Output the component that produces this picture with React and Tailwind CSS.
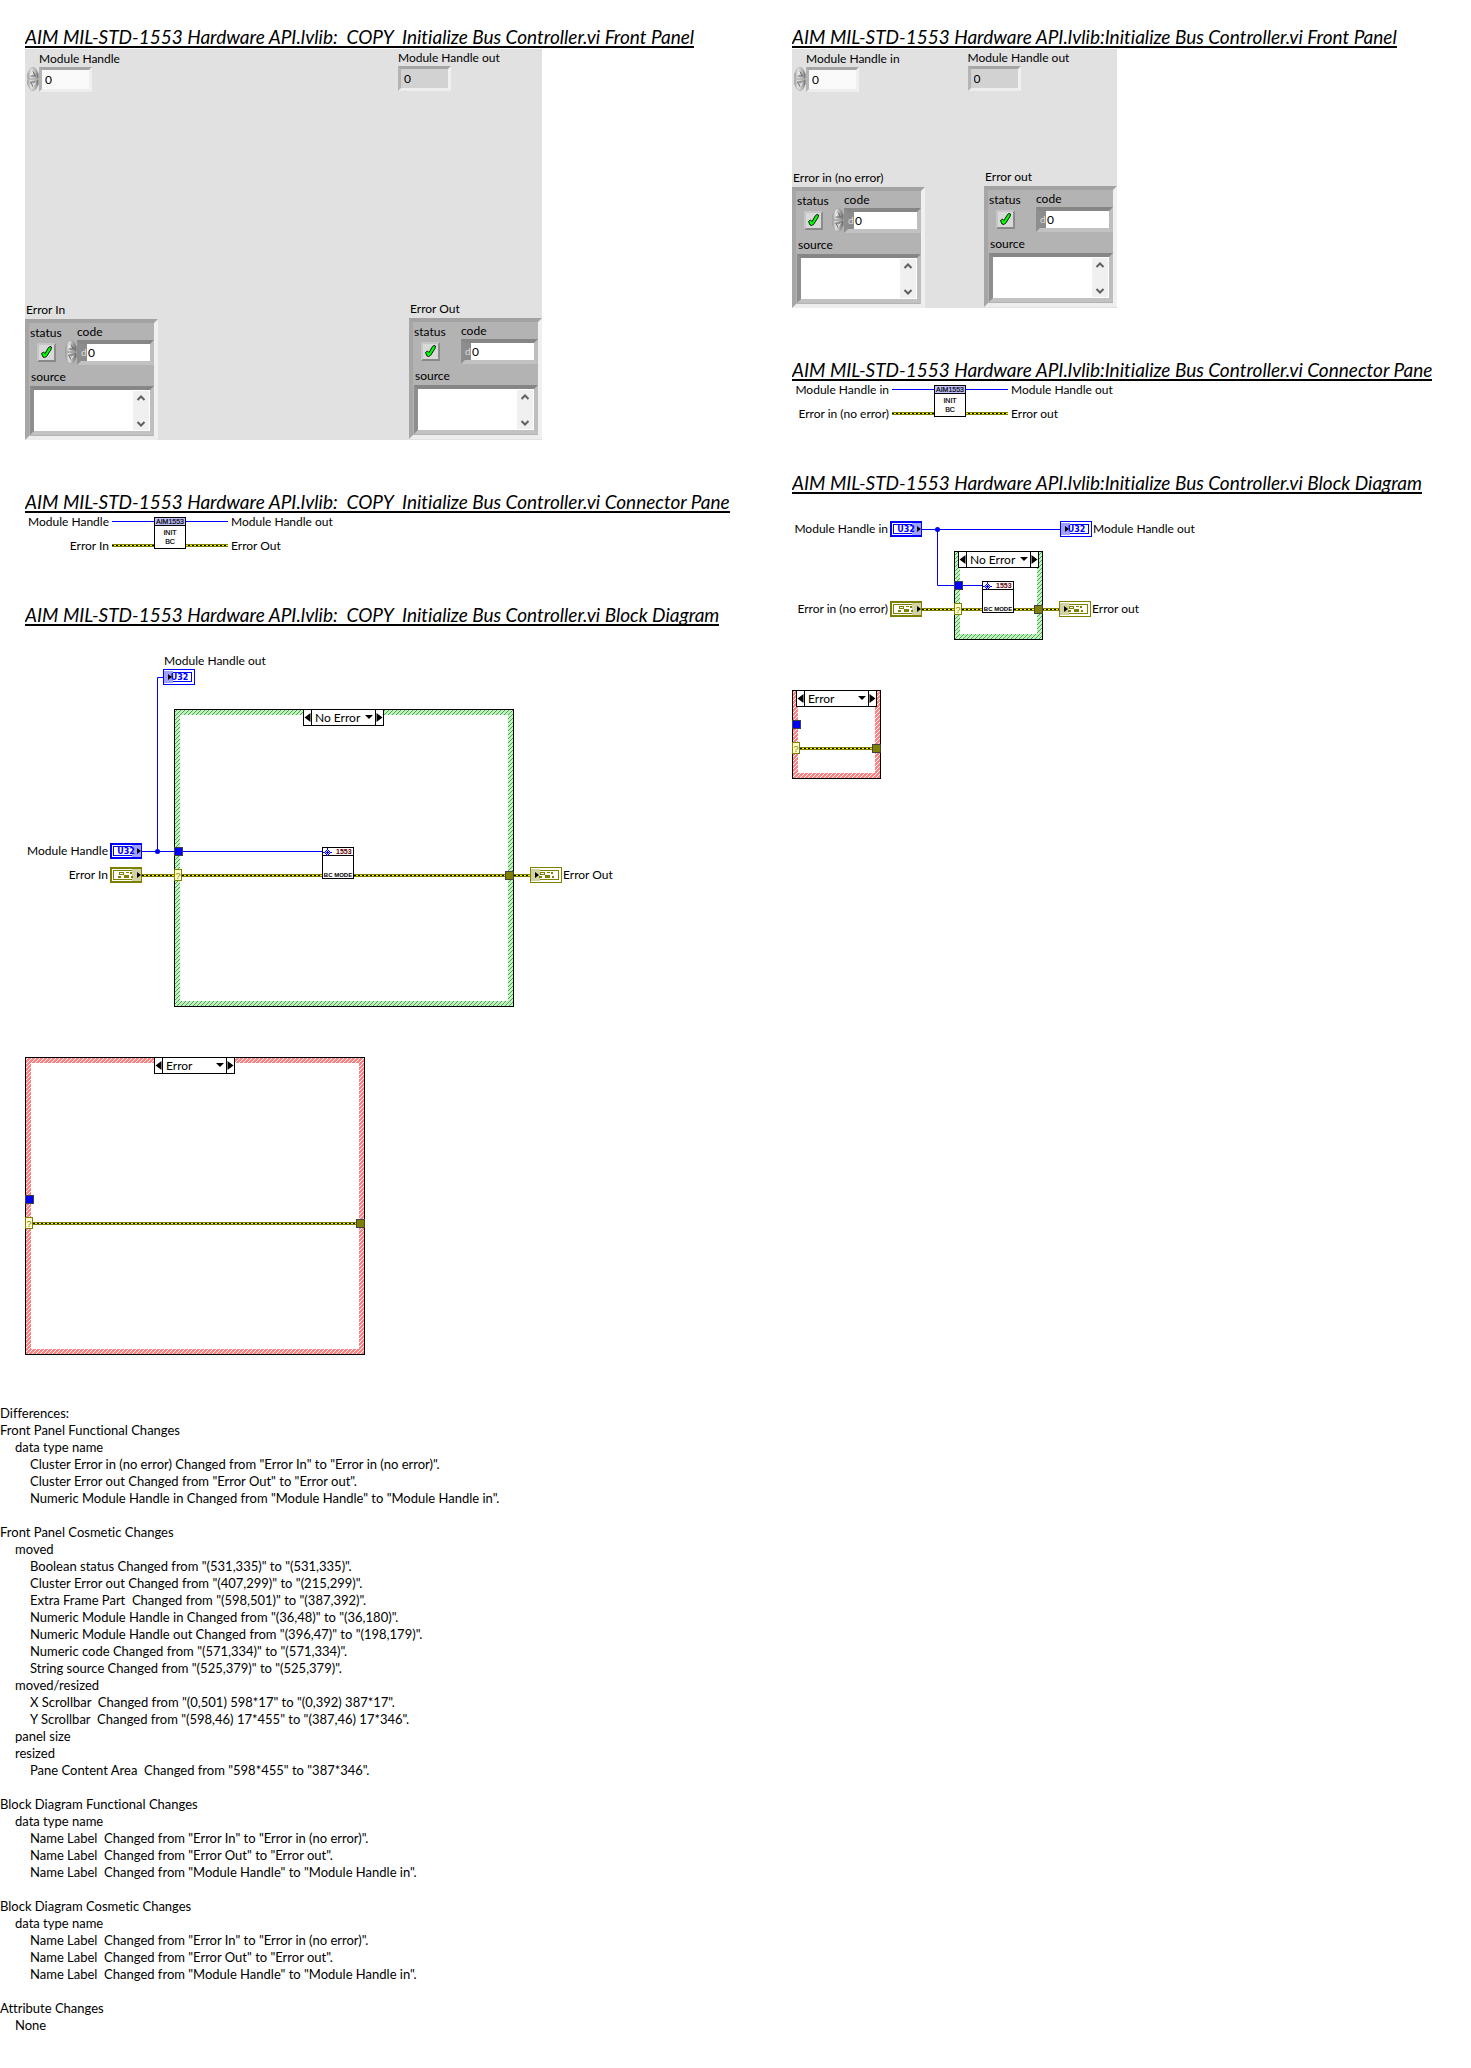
import { useId } from "react";

const BLUE = "#0000ff";
const OLIVE = "#808000";

/* ---------- shared text ---------- */

function Heading({ children }) {
  return (
    <h2 className="h-6 w-fit overflow-hidden border-b-2 border-black text-[19px] leading-[26px] font-normal whitespace-pre italic">
      {children}
    </h2>
  );
}

/* ---------- front panel controls ---------- */

function Spinner({ dark }) {
  const id = useId();
  const shade = dark ? "#94949a" : "#b0b0b0";
  const half = (flip) => (
    <svg width="12" height="12" viewBox="0 0 12 12" aria-hidden="true">
      <defs>
        <linearGradient id={id + flip} x1={flip ? "1" : "0"} x2={flip ? "0" : "1"}>
          <stop offset="0" stopColor="#9a9a9a" />
          <stop offset="0.3" stopColor="#e4e4e4" />
          <stop offset="0.75" stopColor={shade} />
          <stop offset="1" stopColor="#606060" />
        </linearGradient>
      </defs>
      <g transform={flip ? "rotate(180 6 6)" : undefined}>
        <path d="M0.5 11.5V7L3 2L5 0.5H7L9 2L11.5 7V11.5Z" fill={`url(#${id + flip})`} stroke="#9c9c9c" strokeWidth="0.5" />
        <path d="M3.5 9L6 4.5" stroke="#f2f2f2" fill="none" />
        <path d="M6 4.5L8.5 9H3.5" stroke="#505050" fill="none" strokeWidth="0.8" />
      </g>
    </svg>
  );
  return (
    <span className="flex w-3 shrink-0 flex-col">
      <button type="button" aria-label="Increment" className="block h-3">{half("")}</button>
      <button type="button" aria-label="Decrement" className="block h-3">{half("f")}</button>
    </span>
  );
}

function Numeric({ label, readOnly }) {
  const id = useId();
  return (
    <div className={readOnly ? "w-fit pt-px" : "w-fit pt-0.5"}>
      <label htmlFor={id} className={readOnly ? "block leading-4" : "block pl-3 leading-4"}>
        {label}
      </label>
      <div className="flex">
        {!readOnly && <Spinner />}
        <input
          id={id}
          defaultValue="0"
          readOnly={readOnly}
          className={
            "h-[25px] w-[53px] border-[3px] border-t-[#a6a6a6] border-r-[#f0f0f0] border-b-[#ededed] border-l-[#b4b4b4] pl-[3px] outline-none " +
            (readOnly ? "bg-[#d2d2d2]" : "bg-[#fafafa]")
          }
        />
      </div>
    </div>
  );
}

function CheckMark() {
  return (
    <svg width="11" height="12" viewBox="0 0 11 12" className="pointer-events-none absolute top-[3px] left-1" aria-hidden="true">
      <path d="M0.5 7.5L2.5 6L4 7.5L7.5 1.5L9 0.5L10.5 1L10 3.5L5.5 10.5L3.5 11.5L2 11Z" fill="#00ff00" stroke="#000" strokeWidth="0.9" strokeLinejoin="round" />
    </svg>
  );
}

function ScrollArrow({ down }) {
  return (
    <svg width="16" height="12" viewBox="0 0 16 12" aria-hidden="true">
      <path d={down ? "M4.5 4L8 7.5L11.5 4" : "M4.5 9L8 5.5L11.5 9"} fill="none" stroke="#606060" strokeWidth="2" />
    </svg>
  );
}

function ErrorCluster({ label, readOnly }) {
  const id = useId();
  const inset = "border-4 border-t-[#868686] border-r-[#bebebe] border-b-[#c2c2c2] border-l-[#8e8e8e]";
  return (
    <fieldset className={readOnly ? "w-[133px] min-w-0 pb-px" : "w-[133px] min-w-0"}>
      <legend className="mb-px block pl-px leading-4">{label}</legend>
      <div className="h-[121px] border-4 border-t-[#a2a2a2] border-r-[#f0f0f0] border-b-[#ededed] border-l-[#a6a6a6] bg-[#b3b3b3]">
        <div className="flex pt-px">
          <div className="w-9 shrink-0 pt-px pl-px">
            <label htmlFor={id + "s"} className="block leading-4">status</label>
            <div className="relative mt-0.5 ml-[7px] size-[19px]">
              <input
                id={id + "s"}
                type="checkbox"
                className="block size-[19px] appearance-none border-2 border-t-[#c6c6c6] border-r-[#8c8c8c] border-b-[#888888] border-l-[#c6c6c6] bg-[#d9d9d9]"
              />
              <CheckMark />
            </div>
          </div>
          <div className="min-w-0 flex-1">
            <label htmlFor={id + "c"} className="block pl-3 leading-4">code</label>
            <div className="flex">
              {readOnly ? <span className="w-3 shrink-0" /> : <Spinner dark />}
              <div className={"flex h-[25px] min-w-0 flex-1 " + inset}>
                <span className="w-1.5 shrink-0 bg-[#8c8c8c] text-[10px] leading-4 text-[#dedede]">d</span>
                <input
                  id={id + "c"}
                  defaultValue="0"
                  readOnly={readOnly}
                  className="h-full w-0 min-w-0 flex-1 bg-white pl-px outline-none"
                />
              </div>
            </div>
          </div>
        </div>
        <label htmlFor={id + "t"} className="mt-1 block pl-0.5 leading-4">source</label>
        <div className={"mt-px ml-px flex h-[49px] " + inset}>
          <textarea id={id + "t"} readOnly={readOnly} className="h-full w-0 min-w-0 flex-1 resize-none bg-white outline-none" />
          <span className="flex w-[17px] shrink-0 flex-col justify-between border border-l-0 border-white bg-[#f0f0f0]">
            <ScrollArrow />
            <ScrollArrow down />
          </span>
        </div>
      </div>
    </fieldset>
  );
}

function FrontPanel({ className, topGap, labels }) {
  return (
    <div className={"mt-px flex flex-col justify-between bg-[#e1e1e1] " + className}>
      <div className={"flex pl-0.5 " + topGap}>
        <Numeric label={labels[0]} />
        <Numeric label={labels[1]} readOnly />
      </div>
      <div className="flex items-end justify-between">
        <ErrorCluster label={labels[2]} />
        <ErrorCluster label={labels[3]} readOnly />
      </div>
    </div>
  );
}

/* ---------- connector pane ---------- */

function ErrorWire({ x, y, width }) {
  return (
    <g>
      <rect x={x} y={y} width={width} height="3" fill={OLIVE} />
      <rect x={x} y={y + 1} width={width} height="1" fill="#ffff00" />
      <path d={`M${x} ${y + 1.5}h${width}`} stroke="#000" strokeDasharray="2 2" />
    </g>
  );
}

function ConnectorPane({ labelWidth, labels }) {
  return (
    <div className="flex h-[89px] items-start gap-[3px] whitespace-nowrap">
      <div className={"flex flex-col gap-2 pt-px text-right leading-4 " + labelWidth}>
        <span>{labels[0]}</span>
        <span>{labels[1]}</span>
      </div>
      <svg width="116" height="32" viewBox="0 0 116 32" className="mt-1 shrink-0" aria-label="AIM1553 INIT BC">
        <path d="M0 4.5H116" stroke={BLUE} />
        <ErrorWire x={0} y={27} width={116} />
        <rect x="42.5" y="0.5" width="31" height="31" fill="#fff" stroke="#000" />
        <rect x="43" y="1" width="30" height="7" fill="#c0c0ff" />
        <path d="M42 8.5H74" stroke="#000" />
        <g fontFamily="Liberation Sans" fontSize="7" textAnchor="middle" fill="#000" stroke="#000" strokeWidth="0.2">
          <text x="58" y="7">AIM1553</text>
          <text x="58" y="18">INIT</text>
          <text x="58" y="27">BC</text>
        </g>
      </svg>
      <div className="flex flex-col gap-2 pt-px leading-4">
        <span>{labels[2]}</span>
        <span>{labels[3]}</span>
      </div>
    </div>
  );
}

/* ---------- block diagram ---------- */

const TONES = {
  green: { base: "#b0ffb0", line: "#808080" },
  red: { base: "#ff8080", line: "#ffffff" },
};

function CaseFrame({ x, y, w, h, tone }) {
  const id = useId();
  const { base, line } = TONES[tone];
  return (
    <g shapeRendering="crispEdges">
      <defs>
        <pattern id={id} width="4" height="4" patternUnits="userSpaceOnUse">
          <rect width="4" height="4" fill={base} />
          <path d="M3 0h1v1h-1zM2 1h1v1h-1zM1 2h1v1h-1zM0 3h1v1h-1z" fill={line} />
        </pattern>
      </defs>
      <rect x={x} y={y} width={w} height={h} fill="#000" />
      <rect x={x + 1} y={y + 1} width={w - 2} height={h - 2} fill={`url(#${id})`} />
      <rect x={x + 6} y={y + 6} width={w - 12} height={h - 12} fill="#fff" />
    </g>
  );
}

function Tunnels({ x, y, w, top }) {
  return (
    <g>
      <rect x={x + 0.5} y={y + top + 0.5} width="8" height="8" fill={BLUE} stroke="#404040" />
      <rect x={x + 0.5} y={y + top + 22.5} width="7" height="11" fill="#ffffcc" stroke={OLIVE} />
      <text x={x + 4} y={y + top + 31.5} textAnchor="middle" fontFamily="Liberation Sans" fontSize="9" fill={OLIVE}>?</text>
      <rect x={x + w - 8.5} y={y + top + 24.5} width="8" height="8" fill={OLIVE} stroke="#404040" />
    </g>
  );
}

function Terminal({ x, y, kind, out }) {
  const color = kind === "u32" ? BLUE : OLIVE;
  const tint = kind === "u32" ? "#a0a0ff" : "#d2d2a4";
  return (
    <g transform={`translate(${x} ${y})`}>
      <rect width="32" height="16" fill={color} />
      <rect x={out ? 1 : 2} y={out ? 1 : 2} width={out ? 30 : 28} height={out ? 14 : 12} fill="#fff" />
      <rect x="3.5" y="3.5" width="25" height="9" fill="#fff" stroke={color} />
      <rect x={out ? 1 : 22} y="2" width="9" height="12" fill={tint} />
      {kind === "u32" ? (
        <text x={out ? 16.5 : 16} y="11" textAnchor="middle" fontFamily="DejaVu Sans" fontWeight="bold" fontSize="8" fill={color}>
          U32
        </text>
      ) : (
        <path
          transform={out ? "translate(1 0)" : undefined}
          d="M9 5h5v1h-5zM9 6h1v2h-1zM13 6h1v2h-1zM10 7h3v1h-3zM16 5h3v1h-3zM20 5h2v2h-2zM8 9h3v2h-3zM14 8h5v3h-5zM21 9h2v2h-2z"
          fill={color}
        />
      )}
      <path d={out ? "M5 5V11L9 8Z" : "M27 5V11L31 8Z"} fill="#000" />
    </g>
  );
}

function BcModeIcon({ x, y }) {
  return (
    <g transform={`translate(${x} ${y})`}>
      <rect x="0.5" y="0.5" width="31" height="31" fill="#fff" stroke="#000" />
      <path d="M0 8.5H32" stroke="#000" />
      <path d="M5.5 1V9M1 5.5H10" stroke={BLUE} />
      <path d="M5.5 2.5L8.5 5.5L5.5 8.5L2.5 5.5Z" fill="#c8c8ff" stroke={BLUE} />
      <path d="M4 5.5H7M5.5 4V7" stroke={BLUE} />
      <g fontFamily="Liberation Sans" fontWeight="bold">
        <text x="14" y="7" fontSize="7" fill="#600000">1553</text>
        <text x="16" y="30" fontSize="6" textAnchor="middle">BC MODE</text>
      </g>
    </g>
  );
}

function CaseSelector({ value, className }) {
  return (
    <div className={"absolute flex h-[17px] w-[81px] border border-black bg-white " + className}>
      <button type="button" aria-label="Previous case" className="flex w-2 shrink-0 border-r border-black">
        <svg width="7" height="15" viewBox="0 0 7 15"><path d="M6.5 3V12L0.5 7.5Z" /></svg>
      </button>
      <div className="relative flex-1">
        <select aria-label="Case" defaultValue={value} className="block h-[15px] w-full appearance-none bg-white pl-[3px] leading-[15px] outline-none">
          <option>No Error</option>
          <option>Error</option>
        </select>
        <svg width="8" height="4" viewBox="0 0 8 4" className="pointer-events-none absolute top-[5px] right-0.5">
          <path d="M0 0H8L4 4Z" />
        </svg>
      </div>
      <button type="button" aria-label="Next case" className="flex w-2 shrink-0 border-l border-black">
        <svg width="7" height="15" viewBox="0 0 7 15"><path d="M0.5 3V12L6.5 7.5Z" /></svg>
      </button>
    </div>
  );
}

function ErrorCase({ w, h, top, selector }) {
  return (
    <div className="relative mt-[50px] w-fit">
      <svg width={w} height={h} viewBox={`0 0 ${w} ${h}`} className="block">
        <CaseFrame x={0} y={0} w={w} h={h} tone="red" />
        <ErrorWire x={8} y={top + 27} width={w - 16} />
        <Tunnels x={0} y={0} w={w} top={top} />
      </svg>
      <CaseSelector value="Error" className={selector} />
    </div>
  );
}

function CopyDiagram() {
  return (
    <div className="relative leading-4 whitespace-nowrap">
      <svg width="540" height="381" viewBox="0 0 540 381" className="block">
        <CaseFrame x={149} y={83} w={340} h={298} tone="green" />
        <path d="M117 225.5H297M132.5 225.5V51.5H138" fill="none" stroke={BLUE} />
        <circle cx="132.5" cy="225.5" r="2.5" fill={BLUE} />
        <ErrorWire x={117} y={248} width={388} />
        <Tunnels x={149} y={83} w={340} top={138} />
        <Terminal x={138} y={43} kind="u32" out />
        <Terminal x={85} y={217} kind="u32" />
        <Terminal x={85} y={241} kind="error" />
        <Terminal x={505} y={241} kind="error" out />
        <BcModeIcon x={297} y={221} />
      </svg>
      <CaseSelector value="No Error" className="top-[83px] left-[278px]" />
      <span className="absolute top-[27px] left-[139px]">Module Handle out</span>
      <span className="absolute top-[217px] left-0 w-[83px] text-right">Module Handle</span>
      <span className="absolute top-[241px] left-0 w-[83px] text-right">Error In</span>
      <span className="absolute top-[241px] left-[538px]">Error Out</span>
    </div>
  );
}

function OriginalDiagram() {
  return (
    <div className="relative leading-4 whitespace-nowrap">
      <svg width="300" height="146" viewBox="0 0 300 146" className="block">
        <CaseFrame x={162} y={57} w={89} h={89} tone="green" />
        <path d="M130 35.5H268M145.5 35.5V91.5H190" fill="none" stroke={BLUE} />
        <circle cx="145.5" cy="35.5" r="2.5" fill={BLUE} />
        <ErrorWire x={130} y={114} width={137} />
        <Tunnels x={162} y={57} w={89} top={30} />
        <Terminal x={98} y={27} kind="u32" />
        <Terminal x={268} y={27} kind="u32" out />
        <Terminal x={98} y={107} kind="error" />
        <Terminal x={267} y={107} kind="error" out />
        <BcModeIcon x={190} y={87} />
      </svg>
      <CaseSelector value="No Error" className="top-[57px] left-[166px]" />
      <span className="absolute top-[27px] left-0 w-24 text-right">Module Handle in</span>
      <span className="absolute top-[27px] left-[301px]">Module Handle out</span>
      <span className="absolute top-[107px] left-0 w-24 text-right">Error in (no error)</span>
      <span className="absolute top-[107px] left-[300px]">Error out</span>
    </div>
  );
}

/* ---------- difference list ---------- */

const NAME_CHANGES = [
  'Name Label  Changed from "Error In" to "Error in (no error)".',
  'Name Label  Changed from "Error Out" to "Error out".',
  'Name Label  Changed from "Module Handle" to "Module Handle in".',
];

const DIFFERENCES = [
  ["Front Panel Functional Changes", [
    ["data type name", [
      'Cluster Error in (no error) Changed from "Error In" to "Error in (no error)".',
      'Cluster Error out Changed from "Error Out" to "Error out".',
      'Numeric Module Handle in Changed from "Module Handle" to "Module Handle in".',
    ]],
  ]],
  ["Front Panel Cosmetic Changes", [
    ["moved", [
      'Boolean status Changed from "(531,335)" to "(531,335)".',
      'Cluster Error out Changed from "(407,299)" to "(215,299)".',
      'Extra Frame Part  Changed from "(598,501)" to "(387,392)".',
      'Numeric Module Handle in Changed from "(36,48)" to "(36,180)".',
      'Numeric Module Handle out Changed from "(396,47)" to "(198,179)".',
      'Numeric code Changed from "(571,334)" to "(571,334)".',
      'String source Changed from "(525,379)" to "(525,379)".',
    ]],
    ["moved/resized", [
      'X Scrollbar  Changed from "(0,501) 598*17" to "(0,392) 387*17".',
      'Y Scrollbar  Changed from "(598,46) 17*455" to "(387,46) 17*346".',
    ]],
    ["panel size", []],
    ["resized", ['Pane Content Area  Changed from "598*455" to "387*346".']],
  ]],
  ["Block Diagram Functional Changes", [["data type name", NAME_CHANGES]]],
  ["Block Diagram Cosmetic Changes", [["data type name", NAME_CHANGES]]],
  ["Attribute Changes", [["None", []]]],
];

function Differences() {
  return (
    <section className="mt-[50px] text-[13px] leading-[17px] whitespace-pre">
      <h2>Differences:</h2>
      <div className="flex flex-col gap-[17px]">
        {DIFFERENCES.map(([title, groups]) => (
          <div key={title}>
            <h3>{title}</h3>
            <ul className="pl-[15px]">
              {groups.map(([name, items]) => (
                <li key={name}>
                  {name}
                  {items.length > 0 && (
                    <ul className="pl-[15px]">
                      {items.map((item) => <li key={item}>{item}</li>)}
                    </ul>
                  )}
                </li>
              ))}
            </ul>
          </div>
        ))}
      </div>
    </section>
  );
}

export default function App() {
  return (
    <main className="bg-white pt-6 pb-8 font-['Lato',sans-serif] text-xs text-black [font-variant-ligatures:none]">
      <div className="grid grid-cols-[minmax(0,767fr)_minmax(0,679fr)] pl-[25px]">
        <div>
          <Heading>{"AIM MIL-STD-1553 Hardware API.lvlib:  COPY  Initialize Bus Controller.vi Front Panel"}</Heading>
          <FrontPanel
            className="h-[391px] w-[517px]"
            topGap="gap-[278px]"
            labels={["Module Handle", "Module Handle out", "Error In", "Error Out"]}
          />
          <div className="mt-[49px]">
            <Heading>{"AIM MIL-STD-1553 Hardware API.lvlib:  COPY  Initialize Bus Controller.vi Connector Pane"}</Heading>
          </div>
          <ConnectorPane labelWidth="w-[84px]" labels={["Module Handle", "Error In", "Module Handle out", "Error Out"]} />
          <Heading>{"AIM MIL-STD-1553 Hardware API.lvlib:  COPY  Initialize Bus Controller.vi Block Diagram"}</Heading>
          <CopyDiagram />
          <ErrorCase w={340} h={298} top={138} selector="top-0 left-[129px]" />
        </div>
        <div>
          <Heading>AIM MIL-STD-1553 Hardware API.lvlib:Initialize Bus Controller.vi Front Panel</Heading>
          <FrontPanel
            className="h-[259px] w-[325px]"
            topGap="gap-[68px]"
            labels={["Module Handle in", "Module Handle out", "Error in (no error)", "Error out"]}
          />
          <div className="mt-[49px]">
            <Heading>AIM MIL-STD-1553 Hardware API.lvlib:Initialize Bus Controller.vi Connector Pane</Heading>
          </div>
          <ConnectorPane labelWidth="w-[97px]" labels={["Module Handle in", "Error in (no error)", "Module Handle out", "Error out"]} />
          <Heading>AIM MIL-STD-1553 Hardware API.lvlib:Initialize Bus Controller.vi Block Diagram</Heading>
          <OriginalDiagram />
          <ErrorCase w={89} h={89} top={30} selector="top-0 left-1" />
        </div>
      </div>
      <Differences />
    </main>
  );
}
